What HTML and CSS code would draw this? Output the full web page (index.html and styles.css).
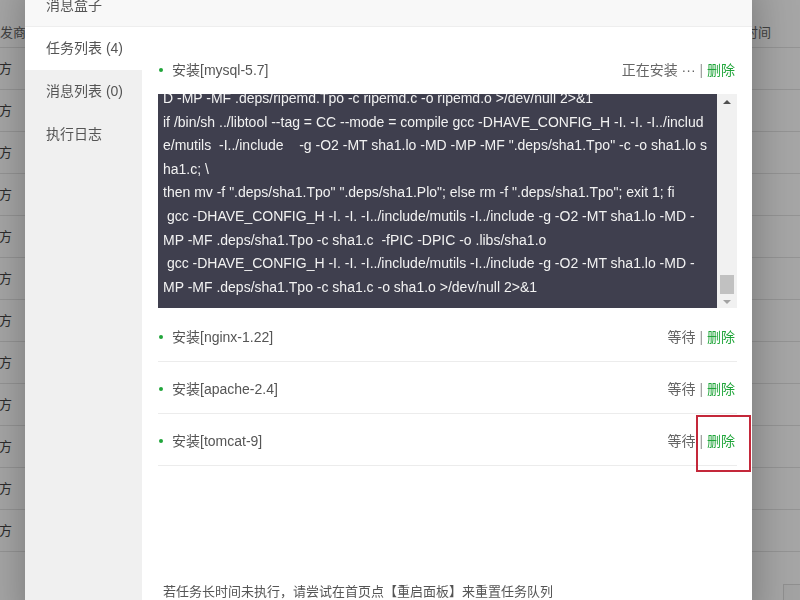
FILE: index.html
```html
<!DOCTYPE html>
<html lang="zh-CN">
<head>
    <meta charset="UTF-8">
    <meta name="viewport" content="width=device-width, initial-scale=1.0">
    <title>消息盒子</title>
    <link rel="stylesheet" href="styles.css">
</head>
<body>
    <!-- page behind the dialog -->
    <div class="page">
        <div class="table-row table-head">
            <div class="col-first">开发商</div>
            <div class="col-mid"></div>
            <div class="col-last">时间</div>
        </div>
        <div class="table-row"><div class="col-first">官方</div><div class="col-mid"></div><div class="col-last"></div></div>
        <div class="table-row"><div class="col-first">官方</div><div class="col-mid"></div><div class="col-last"></div></div>
        <div class="table-row"><div class="col-first">官方</div><div class="col-mid"></div><div class="col-last"></div></div>
        <div class="table-row"><div class="col-first">官方</div><div class="col-mid"></div><div class="col-last"></div></div>
        <div class="table-row"><div class="col-first">官方</div><div class="col-mid"></div><div class="col-last"></div></div>
        <div class="table-row"><div class="col-first">官方</div><div class="col-mid"></div><div class="col-last"></div></div>
        <div class="table-row"><div class="col-first">官方</div><div class="col-mid"></div><div class="col-last"></div></div>
        <div class="table-row"><div class="col-first">官方</div><div class="col-mid"></div><div class="col-last"></div></div>
        <div class="table-row"><div class="col-first">官方</div><div class="col-mid"></div><div class="col-last"></div></div>
        <div class="table-row"><div class="col-first">官方</div><div class="col-mid"></div><div class="col-last"></div></div>
        <div class="table-row"><div class="col-first">官方</div><div class="col-mid"></div><div class="col-last"></div></div>
        <div class="table-row"><div class="col-first">官方</div><div class="col-mid"></div><div class="col-last"></div></div>
        <div class="pager"><span class="page-btn"></span></div>
    </div>

    <div id="shade"></div>

    <div class="layer">
        <div class="layer-title">消息盒子</div>
        <div class="layer-body">
            <ul class="tabs">
                <li class="active">任务列表 (4)</li>
                <li>消息列表 (0)</li>
                <li>执行日志</li>
            </ul>
            <section class="task-panel">
                <div class="task-list">
                    <div class="task task-running">
                        <div class="task-head">
                            <span class="task-name"><i class="dot"></i>安装[mysql-5.7]</span>
                            <span class="task-ops">正在安装 ··· <em>|</em> <a class="del">删除</a></span>
                        </div>
                        <div class="log-box">
                            <div class="log-text">
                                <div class="log-inner">
                                    <div>D -MP -MF .deps/ripemd.Tpo -c ripemd.c -o ripemd.o &gt;/dev/null 2&gt;&amp;1</div>
                                    <div>if /bin/sh ../libtool --tag = CC --mode = compile gcc -DHAVE_CONFIG_H -I. -I. -I../includ</div>
                                    <div>e/mutils  -I../include    -g -O2 -MT sha1.lo -MD -MP -MF ".deps/sha1.Tpo" -c -o sha1.lo s</div>
                                    <div>ha1.c; \</div>
                                    <div>then mv -f ".deps/sha1.Tpo" ".deps/sha1.Plo"; else rm -f ".deps/sha1.Tpo"; exit 1; fi</div>
                                    <div> gcc -DHAVE_CONFIG_H -I. -I. -I../include/mutils -I../include -g -O2 -MT sha1.lo -MD -</div>
                                    <div>MP -MF .deps/sha1.Tpo -c sha1.c  -fPIC -DPIC -o .libs/sha1.o</div>
                                    <div> gcc -DHAVE_CONFIG_H -I. -I. -I../include/mutils -I../include -g -O2 -MT sha1.lo -MD -</div>
                                    <div>MP -MF .deps/sha1.Tpo -c sha1.c -o sha1.o &gt;/dev/null 2&gt;&amp;1</div>
                                </div>
                            </div>
                            <div class="log-scroll">
                                <span class="arrow-up"></span>
                                <span class="thumb"></span>
                                <span class="arrow-down"></span>
                            </div>
                        </div>
                    </div>
                    <div class="task">
                        <div class="task-head">
                            <span class="task-name"><i class="dot"></i>安装[nginx-1.22]</span>
                            <span class="task-ops">等待 <em>|</em> <a class="del">删除</a></span>
                        </div>
                    </div>
                    <div class="task">
                        <div class="task-head">
                            <span class="task-name"><i class="dot"></i>安装[apache-2.4]</span>
                            <span class="task-ops">等待 <em>|</em> <a class="del">删除</a></span>
                        </div>
                    </div>
                    <div class="task">
                        <div class="task-head">
                            <span class="task-name"><i class="dot"></i>安装[tomcat-9]</span>
                            <span class="task-ops">等待 <em>|</em> <a class="del">删除</a></span>
                        </div>
                        <div class="mark-box"></div>
                    </div>
                </div>
                <p class="task-tip">若任务长时间未执行，请尝试在首页点【重启面板】来重置任务队列</p>
            </section>
        </div>
    </div>
</body>
</html>
```

FILE: styles.css
```css
body {
    margin: 0;
    padding: 0;
    font-family: "Liberation Sans", "Noto Sans CJK SC", sans-serif;
    font-size: 14px;
    color: #333;
    background: #fff;
    overflow: hidden;
    height: 600px;
}

/* background page */
.page {
    height: 600px;
}

.table-row {
    display: flex;
    height: 41px;
    line-height: 41px;
    border-bottom: 1px solid #e4e4e4;
    color: #444;
    font-size: 13px;
}

.table-head {
    height: 47px;
    line-height: 66px;
    color: #666;
}

.col-first {
    width: 12px;
    padding-right: 14px;
    overflow: hidden;
    white-space: nowrap;
    direction: rtl;
}

.table-head .col-first {
    padding-right: 0;
    width: 26px;
}

.col-mid {
    flex: 1;
}

.col-last {
    width: 55px;
}

.pager {
    display: flex;
    justify-content: flex-end;
    padding-top: 32px;
}

.page-btn {
    width: 16px;
    height: 30px;
    border: 1px solid #ddd;
    border-right: none;
    background: #fafafa;
}

#shade {
    position: fixed;
    top: 0;
    left: 0;
    width: 100%;
    height: 100%;
    background: rgba(0, 0, 0, 0.35);
}

/* dialog */
.layer {
    position: absolute;
    top: -16px;
    left: 25px;
    width: 727px;
    background: #fff;
    box-shadow: 1px 1px 40px rgba(0, 0, 0, 0.3);
}

.layer-title {
    height: 42px;
    line-height: 42px;
    padding-left: 21px;
    background: #f8f8f8;
    border-bottom: 1px solid #eee;
    font-size: 14px;
    color: #555;
}

.layer-body {
    display: flex;
    height: 600px;
}

.tabs {
    list-style: none;
    margin: 0;
    padding: 0;
    width: 117px;
    background: #f0f0f0;
}

.tabs li {
    height: 43px;
    line-height: 43px;
    padding-left: 21px;
    color: #555;
}

.tabs li.active {
    background: #fff;
}

.task-panel {
    flex: 1;
    display: flex;
    flex-direction: column;
    padding: 16px 15px 0 16px;
}

.task-list {
    flex: 1;
}

.task {
    position: relative;
    border-bottom: 1px solid #ececec;
}

.task-running {
    border-bottom: none;
    padding-bottom: 2px;
}

.task-head {
    display: flex;
    justify-content: space-between;
    align-items: center;
    height: 51px;
    padding-right: 2px;
    color: #555;
}

.task-name {
    display: flex;
    align-items: center;
}

.dot {
    display: block;
    width: 4px;
    height: 4px;
    border-radius: 50%;
    background: #20a53a;
    margin: 2px 9px 0 1px;
}

.task-ops {
    color: #666;
}

.task-ops em {
    font-style: normal;
    color: #999;
}

.del {
    color: #20a53a;
    cursor: pointer;
}

/* install log */
.log-box {
    display: flex;
    height: 214px;
}

.log-text {
    flex: 1;
    overflow: hidden;
    background: #3f3f4e;
    color: #f2f2f2;
    font-size: 14px;
    line-height: 23.6px;
    padding-left: 5px;
}

.log-inner {
    margin-top: -7px;
}

.log-inner div {
    white-space: pre;
}

.log-scroll {
    width: 20px;
    background: #f1f1f1;
    display: flex;
    flex-direction: column;
    align-items: center;
}

.arrow-up {
    margin-top: 6px;
    border-left: 4px solid transparent;
    border-right: 4px solid transparent;
    border-bottom: 4px solid #505050;
}

.thumb {
    margin-top: auto;
    width: 14px;
    height: 19px;
    background: #c1c1c1;
}

.arrow-down {
    margin: 6px 0 4px;
    border-left: 4px solid transparent;
    border-right: 4px solid transparent;
    border-top: 4px solid #a3a3a3;
}

.mark-box {
    position: absolute;
    top: 1px;
    right: -14px;
    width: 51px;
    height: 53px;
    border: 2px solid #c4283a;
}

.task-tip {
    margin: 0;
    padding: 0 0 25px 5px;
    line-height: 20px;
    font-size: 13px;
    color: #555;
}
```
